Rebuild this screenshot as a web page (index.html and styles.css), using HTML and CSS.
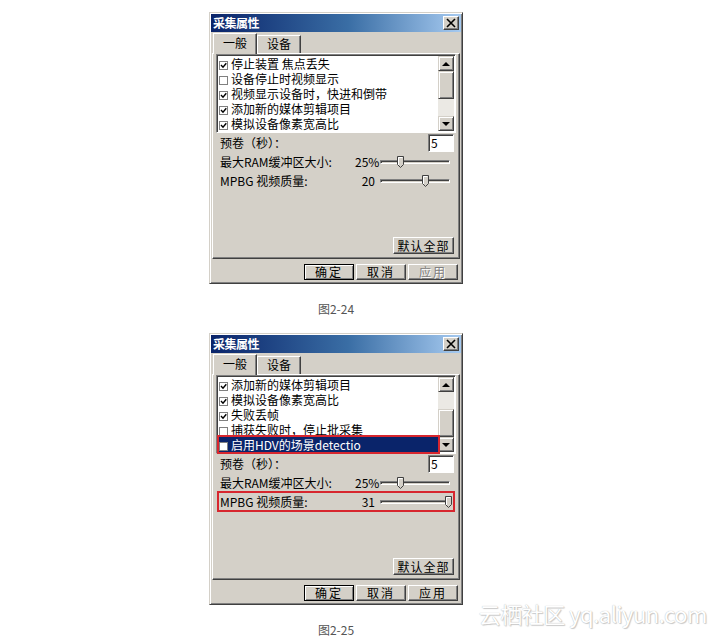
FILE: index.html
```html
<!DOCTYPE html>
<html lang="zh-CN">
<head>
    <meta charset="UTF-8">
    <title>采集属性</title>
    <link rel="stylesheet" href="styles.css">
</head>
<body>
<div class="page">

    <figure class="figure">
        <div class="dialog">
            <div class="titlebar">
                <span class="title">采集属性</span>
                <span class="close">
                    <svg width="12" height="10" viewBox="0 0 12 10"><path d="M2 1 L10 9 M10 1 L2 9" stroke="#000" stroke-width="1.6"/></svg>
                </span>
            </div>
            <div class="body">
                <div class="tabs">
                    <span class="tab active">一般</span>
                    <span class="tab">设备</span>
                </div>
                <div class="panel">
                    <div class="listbox">
                        <ul class="items">
                            <li><span class="check on"></span>停止装置 焦点丢失</li>
                            <li><span class="check"></span>设备停止时视频显示</li>
                            <li><span class="check on"></span>视频显示设备时，快进和倒带</li>
                            <li><span class="check on"></span>添加新的媒体剪辑项目</li>
                            <li><span class="check on"></span>模拟设备像素宽高比</li>
                        </ul>
                        <div class="scrollbar">
                            <span class="sb-btn up"></span>
                            <span class="sb-thumb"></span>
                            <span class="sb-track"></span>
                            <span class="sb-btn down"></span>
                        </div>
                    </div>

                    <div class="row">
                        <span class="label">预卷（秒）：</span>
                        <span class="input">5</span>
                    </div>
                    <div class="row">
                        <span class="label">最大RAM缓冲区大小:</span>
                        <span class="value">25%</span>
                        <span class="slider"><span class="track"></span><span class="thumb" style="left: 17px"></span></span>
                    </div>
                    <div class="row">
                        <span class="label">MPBG 视频质量:</span>
                        <span class="value">20</span>
                        <span class="slider"><span class="track"></span><span class="thumb" style="left: 42px"></span></span>
                    </div>

                    <button class="btn reset">默认全部</button>
                </div>
            </div>
            <div class="footer">
                <button class="btn default">确定</button>
                <button class="btn">取消</button>
                <button class="btn disabled">应用</button>
            </div>
        </div>
        <figcaption>图2-24</figcaption>
    </figure>

    <figure class="figure">
        <div class="dialog">
            <div class="titlebar">
                <span class="title">采集属性</span>
                <span class="close">
                    <svg width="12" height="10" viewBox="0 0 12 10"><path d="M2 1 L10 9 M10 1 L2 9" stroke="#000" stroke-width="1.6"/></svg>
                </span>
            </div>
            <div class="body">
                <div class="tabs">
                    <span class="tab active">一般</span>
                    <span class="tab">设备</span>
                </div>
                <div class="panel">
                    <div class="listbox">
                        <ul class="items">
                            <li><span class="check on"></span>添加新的媒体剪辑项目</li>
                            <li><span class="check on"></span>模拟设备像素宽高比</li>
                            <li><span class="check on"></span>失败丢帧</li>
                            <li><span class="check"></span>捕获失败时，停止批采集</li>
                            <li class="selected mark"><span class="check"></span>启用HDV的场景detectio</li>
                        </ul>
                        <div class="scrollbar">
                            <span class="sb-btn up"></span>
                            <span class="sb-track"></span>
                            <span class="sb-thumb"></span>
                            <span class="sb-btn down"></span>
                        </div>
                    </div>

                    <div class="row">
                        <span class="label">预卷（秒）：</span>
                        <span class="input">5</span>
                    </div>
                    <div class="row">
                        <span class="label">最大RAM缓冲区大小:</span>
                        <span class="value">25%</span>
                        <span class="slider"><span class="track"></span><span class="thumb" style="left: 17px"></span></span>
                    </div>
                    <div class="row mark">
                        <span class="label">MPBG 视频质量:</span>
                        <span class="value">31</span>
                        <span class="slider"><span class="track"></span><span class="thumb" style="left: 65px"></span></span>
                    </div>

                    <button class="btn reset">默认全部</button>
                </div>
            </div>
            <div class="footer">
                <button class="btn default">确定</button>
                <button class="btn">取消</button>
                <button class="btn">应用</button>
            </div>
        </div>
        <figcaption>图2-25</figcaption>
    </figure>

    <div class="watermark">云栖社区 yq.aliyun.com</div>
</div>
</body>
</html>
```

FILE: styles.css
```css
* {
    margin: 0;
    padding: 0;
    box-sizing: border-box;
}

html, body {
    background: #fff;
    overflow: hidden;
}

body {
    font-family: "Noto Sans CJK SC", "Liberation Sans", sans-serif;
    font-size: 12px;
    color: #000;
}

.page {
    position: relative;
    height: 637px;
    padding-top: 12px;
}

.figure {
    width: 254px;
    margin-left: 209px;
}

.figure + .figure {
    margin-top: 17px;
}

figcaption {
    margin-top: 18px;
    line-height: 14px;
    text-align: center;
    color: #555;
}

/* 对话框外框 */
.dialog {
    width: 254px;
    height: 272px;
    background: #d4d0c8;
    border: 1px solid;
    border-color: #d4d0c8 #404040 #404040 #d4d0c8;
    box-shadow: inset 1px 1px #fff, inset -1px -1px #808080;
    padding: 1px;
    display: flex;
    flex-direction: column;
}

.titlebar {
    height: 18px;
    display: flex;
    align-items: center;
    justify-content: space-between;
    background: linear-gradient(to right, #0a246a, #3a6ea5 55%, #a6caf0);
    padding-left: 2px;
}

.title {
    color: #fff;
    font-weight: bold;
    font-size: 12px;
    line-height: 18px;
    letter-spacing: -0.5px;
}

.close {
    width: 16px;
    height: 14px;
    margin-right: 2px;
    display: flex;
    align-items: center;
    justify-content: center;
    background: #d4d0c8;
    border: 1px solid;
    border-color: #fff #404040 #404040 #fff;
    box-shadow: inset -1px -1px #808080;
}

.body {
    padding: 1px 1px 0;
}

/* 选项卡 */
.tabs {
    height: 20px;
    display: flex;
    align-items: flex-end;
    padding-left: 1px;
    position: relative;
    z-index: 1;
}

.tab {
    width: 44px;
    height: 18px;
    line-height: 16px;
    text-align: center;
    background: #d4d0c8;
    border: 1px solid;
    border-bottom: none;
    border-color: #fff #404040 #404040 #fff;
    box-shadow: inset -1px 0 #808080;
}

.tab.active {
    height: 21px;
    margin-bottom: -1px;
    padding-top: 1px;
}

.panel {
    height: 206px;
    display: flex;
    flex-direction: column;
    border: 1px solid;
    border-color: #fff #404040 #404040 #fff;
    box-shadow: inset -1px -1px #808080;
    padding: 0 3px;
}

/* 列表框 */
.listbox {
    height: 79px;
    display: flex;
    background: #fff;
    border: 1px solid;
    border-color: #808080 #fff #fff #808080;
    box-shadow: inset 1px 1px #404040;
    padding: 1px 1px 1px 2px;
}

.items {
    flex: 1;
    list-style: none;
}

.items li {
    height: 15px;
    line-height: 15px;
    display: flex;
    align-items: center;
    white-space: nowrap;
}

.items li.selected {
    background: #0a246a;
    color: #fff;
}

.check {
    width: 9px;
    height: 9px;
    margin: 3px 3px 0 0;
    border: 1px solid #808080;
    background: #fff;
    flex: none;
}

.check.on {
    background: #fff url("data:image/svg+xml,%3Csvg xmlns='http://www.w3.org/2000/svg' width='7' height='7'%3E%3Cpath d='M1 3 L3 5.2 L6.3 1.2' fill='none' stroke='black' stroke-width='1.4'/%3E%3C/svg%3E") no-repeat center;
}

.scrollbar {
    width: 16px;
    display: flex;
    flex-direction: column;
    background: #ebe9e4;
}

.sb-btn, .sb-thumb {
    background: #d4d0c8;
    border: 1px solid;
    border-color: #d4d0c8 #404040 #404040 #d4d0c8;
    box-shadow: inset 1px 1px #fff, inset -1px -1px #808080;
}

.sb-btn {
    height: 15px;
    display: flex;
    align-items: center;
    justify-content: center;
}

.sb-btn::after {
    content: "";
    border-left: 4px solid transparent;
    border-right: 4px solid transparent;
}

.sb-btn.up::after {
    border-bottom: 4px solid #000;
}

.sb-btn.down::after {
    border-top: 4px solid #000;
}

.sb-thumb {
    height: 28px;
}

.sb-track {
    flex: 1;
}

/* 设置行 */
.row {
    height: 19px;
    margin: 0 2px;
    padding-left: 2px;
    display: flex;
    align-items: center;
    white-space: nowrap;
}

.row:first-of-type {
    height: 18px;
    margin-top: 2px;
}

.label {
    flex: 1;
}

.value {
    width: 20px;
    text-align: right;
}

.input {
    width: 26px;
    height: 18px;
    line-height: 15px;
    padding-left: 2px;
    background: #fff;
    border: 1px solid;
    border-color: #808080 #fff #fff #808080;
    box-shadow: inset 1px 1px #404040;
}

.slider {
    position: relative;
    width: 72px;
    height: 14px;
    margin: 0 2px 0 5px;
    display: flex;
    align-items: center;
}

.track {
    width: 70px;
    height: 4px;
    border: 1px solid;
    border-color: #808080 #fff #fff #808080;
    background: #d4d0c8;
    box-shadow: inset 1px 1px #404040;
}

.thumb {
    position: absolute;
    top: 1px;
    width: 7px;
    height: 12px;
    background: url("data:image/svg+xml,%3Csvg xmlns='http://www.w3.org/2000/svg' width='7' height='12'%3E%3Cpath d='M0.5 0.5 H6.5 V8.5 L3.5 11.5 L0.5 8.5 Z' fill='%23d4d0c8' stroke='%23404040'/%3E%3Cpath d='M1.5 9 V1.5 H5.5' fill='none' stroke='white'/%3E%3C/svg%3E") no-repeat;
}

.mark {
    position: relative;
    z-index: 2;
    outline: 2px solid #d7262e;
    outline-offset: -1px;
}

.items li.mark {
    outline-offset: 0;
}

/* 按钮 */
.btn {
    font-family: inherit;
    font-size: 12px;
    color: #000;
    background: #d4d0c8;
    border: 1px solid;
    border-color: #fff #404040 #404040 #fff;
    box-shadow: inset -1px -1px #808080;
    line-height: 14px;
}

.btn.reset {
    width: 61px;
    height: 17px;
    margin: auto 2px 4px auto;
    letter-spacing: 1px;
}

.footer {
    margin-top: 5px;
    padding-right: 3px;
    display: flex;
    justify-content: flex-end;
    gap: 2px;
}

.footer .btn {
    width: 50px;
    height: 16px;
    letter-spacing: 2px;
}

.btn.default {
    border-color: #000;
    box-shadow: inset 1px 1px #fff, inset -1px -1px #808080;
}

.btn.disabled {
    color: #808080;
    text-shadow: 1px 1px #fff;
}

.watermark {
    position: absolute;
    right: 11px;
    bottom: 8px;
    font-size: 22px;
    color: #fff;
    letter-spacing: -0.5px;
    text-shadow: 0 0 1px #aaa, 1px 1px 1px #ccc;
}
```
